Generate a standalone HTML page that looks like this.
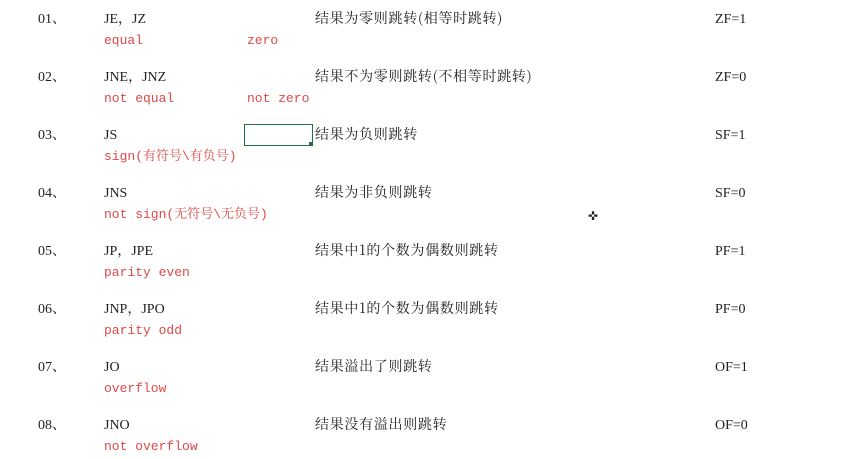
<!DOCTYPE html>
<html><head><meta charset="utf-8"><style>
body{margin:0;width:844px;height:459px;background:#fff;position:relative;overflow:hidden;font-family:"Liberation Serif","Noto Serif CJK SC",serif;font-size:14px;color:#222}
div.t{position:absolute;white-space:nowrap;line-height:16px}
.r{color:#e04848;font-family:"Liberation Mono","Noto Serif CJK SC",monospace;font-size:13px}
.c{font-family:"Noto Serif CJK SC",serif;font-size:14px;letter-spacing:0.7px}
</style></head><body>
<div style="position:absolute;left:244px;top:124px;width:67px;height:20px;border:1px solid #217346"></div>
<div style="position:absolute;left:309px;top:142px;width:4px;height:4px;background:#217346"></div>
<div class="t" style="left:588px;top:208px;font-size:12px">✜</div>
<script>
const rows=[["01、","JE，JZ","equal","zero","结果为零则跳转(相等时跳转)","ZF=1"],
["02、","JNE，JNZ","not equal","not zero","结果不为零则跳转(不相等时跳转)","ZF=0"],
["03、","JS","sign(有符号\\有负号)","","结果为负则跳转","SF=1"],
["04、","JNS","not sign(无符号\\无负号)","","结果为非负则跳转","SF=0"],
["05、","JP，JPE","parity even","","结果中1的个数为偶数则跳转","PF=1"],
["06、","JNP，JPO","parity odd","","结果中1的个数为偶数则跳转","PF=0"],
["07、","JO","overflow","","结果溢出了则跳转","OF=1"],
["08、","JNO","not overflow","","结果没有溢出则跳转","OF=0"]];
let h="";rows.forEach((r,i)=>{const y=12+i*58;
h+=`<div class="t" style="left:38px;top:${y}px">${r[0]}</div><div class="t" style="left:104px;top:${y}px">${r[1]}</div><div class="t c" style="left:315px;top:${y-2}px">${r[4]}</div><div class="t" style="left:715px;top:${y}px">${r[5]}</div><div class="t r" style="left:104px;top:${y+21}px">${r[2]}</div><div class="t r" style="left:247px;top:${y+21}px">${r[3]}</div>`;});
document.write(h);
</script>
</body></html>
